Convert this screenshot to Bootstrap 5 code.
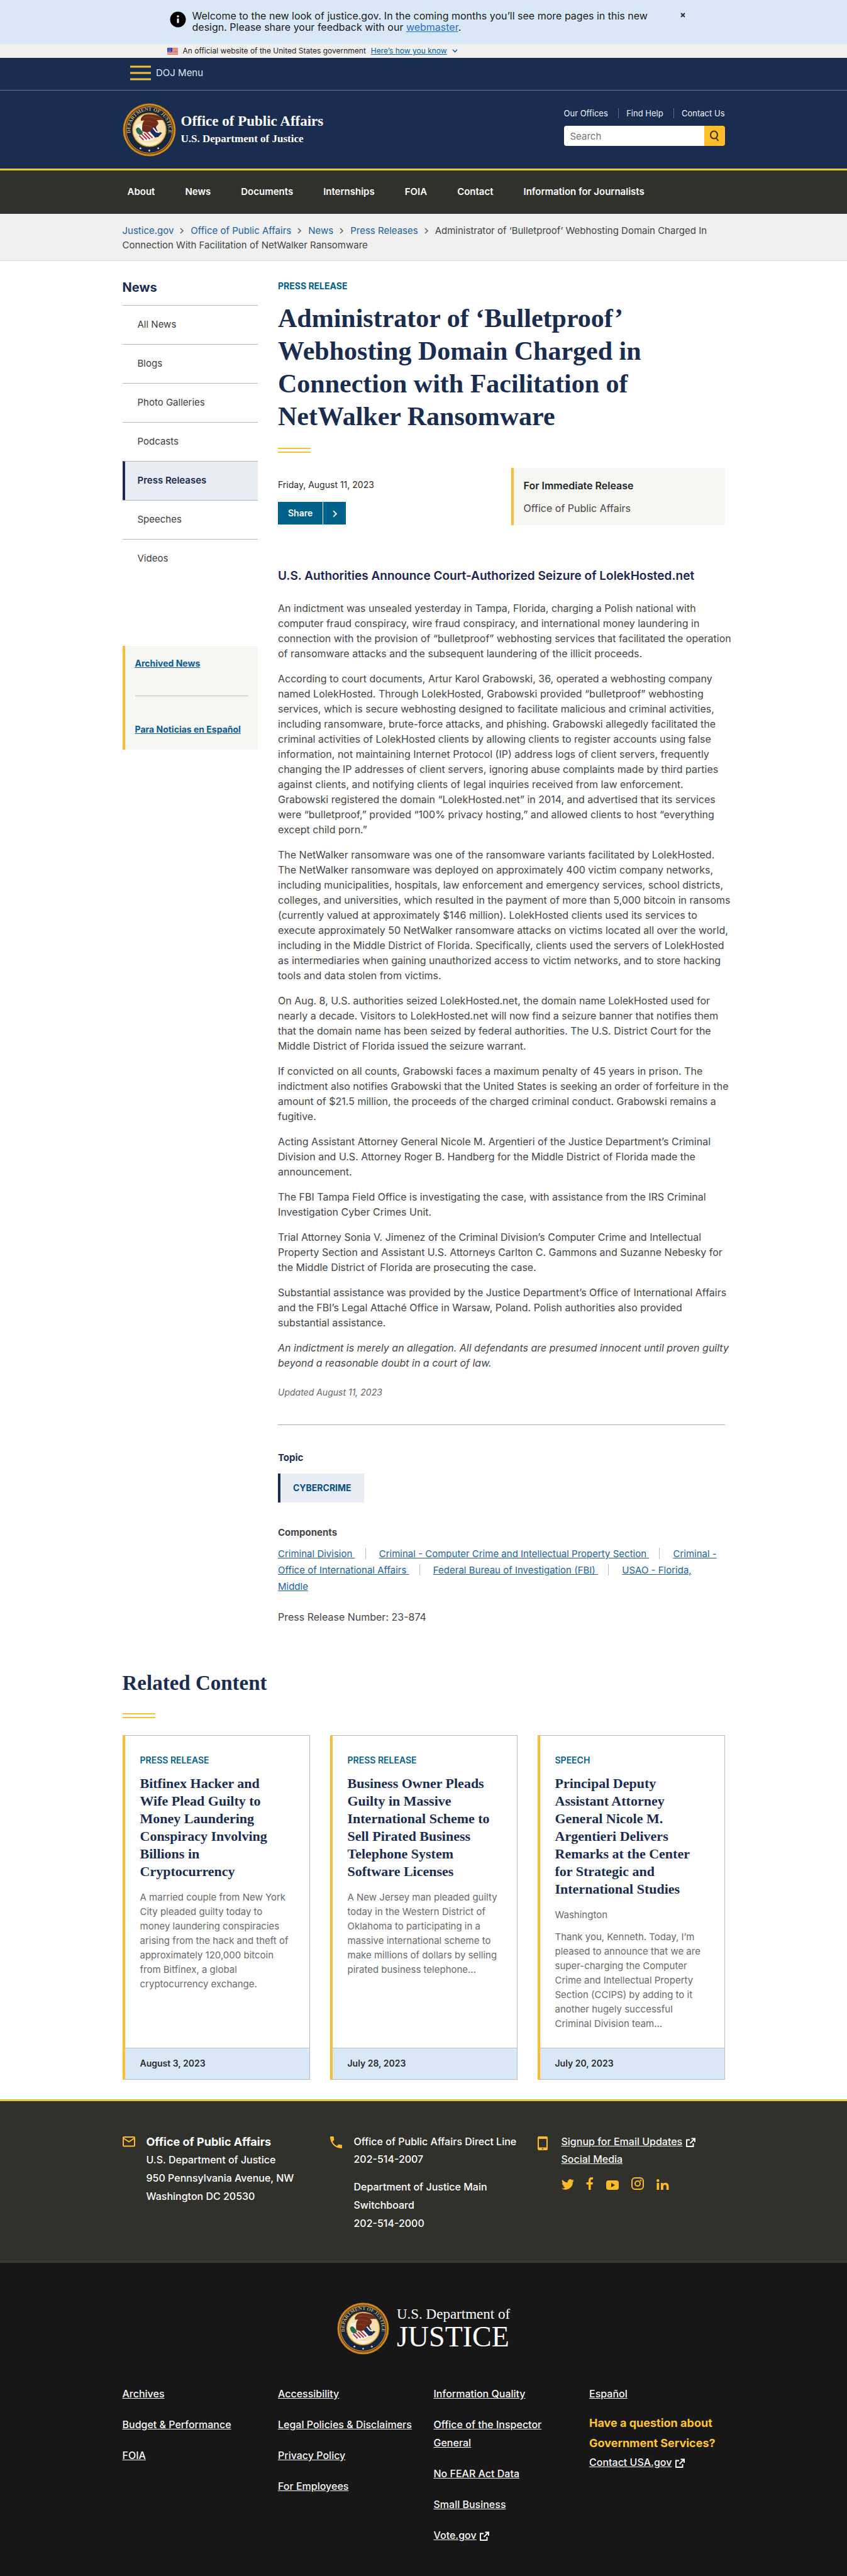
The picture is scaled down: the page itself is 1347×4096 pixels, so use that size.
<!DOCTYPE html>
<html lang="en">
<head>
<meta charset="utf-8">
<meta name="viewport" content="width=device-width, initial-scale=1">
<title>Office of Public Affairs | U.S. Department of Justice</title>
<link href="https://cdn.jsdelivr.net/npm/bootstrap@5.3.0/dist/css/bootstrap.min.css" rel="stylesheet">
<style>
:root{--navy:#1a2c50;--gold:#ffbc2a;--teal:#00618a;--link:#1b629d}
body{font-family:Inter,"Open Sans",sans-serif;font-size:15px;line-height:24px;color:#454545;background:#fff}
.serif{font-family:"Liberation Serif","DejaVu Serif",serif}
.wrap{max-width:1022px;padding:0 32px;margin:0 auto}
.navytext{color:var(--navy)}
.notice{background:#d9e8f6;color:#1b1b1b;min-height:70px;font-size:16px;line-height:18px}
.notice-in{max-width:832px;padding:16px 0 0 8px;margin:0 auto}
.notice-in p{max-width:744px}
.notice-in .info{margin:2px 10px 0 4px}
.notice a{color:#2672c5}
.xbtn{background:none;border:0;padding:0;line-height:0}
.official{background:#f0f0f0;color:#1b1b1b;font-size:12px;line-height:22px}
.official-in{max-width:832px;padding:0 8px;margin:0 auto}
.official a{color:#005ea2}
.menubar{background:var(--navy);height:52px;border-bottom:1px solid #66738c}
.menubar-in{padding:4px 0 0 207px}
.menubar button{color:#dfe6f2;font-size:15px;background:none;border:0;padding:8px 0;line-height:24px}
.masthead{background:var(--navy);border-bottom:3px solid #e9c92f;color:#fff;padding:20px 0 19px}
.top-name{font-size:23px;line-height:28px;font-weight:700}
.sub-name{font-size:17px;line-height:28px;font-weight:700}
.util{font-size:13px;line-height:16px}
.util a{color:#f0f4fb;text-decoration:none}
.util a+a{border-left:1px solid #5a6a88;padding-left:12px;margin-left:12px}
.find{width:256px}
.find input{font-size:15px;border:0;padding:0 10px;border-radius:4px 0 0 4px;min-width:0;height:32px}
.find button{width:39px;background:#fdbd26;border:0;border-radius:0 4px 4px 0;padding:0;line-height:0}
.mainnav{background:#30312b;padding:23px 0 24px}
.mainnav a{color:#fff;font-weight:600;font-size:15px;line-height:22px;text-decoration:none;white-space:nowrap}
.crumbs{background:#f0f0f0;border-bottom:1px solid #dcdee0;padding:15px 0 13px;line-height:23px}
.crumbs a{color:var(--link);text-decoration:none}
.crumbs svg{margin:0 11px 2px 10px;color:#6a6a6a}
.grid{--bs-gutter-x:32px}
.side-h{font-size:20px;line-height:28px;color:var(--navy);font-weight:700;padding:28px 0 14px}
.side .item{display:block;border-top:1px solid #b3b5ba;padding:18px 20px 19px 24px;color:#3d3d3d;text-decoration:none}
.side .now{background:#e8ecf4;border-left:4px solid var(--navy);padding-left:20px;color:var(--navy);font-weight:600}
.panel{background:#f6f6f2;border-left:4px solid var(--gold)}
.panel a{font-size:14px;font-weight:700;color:#0b5c96;line-height:22px;white-space:nowrap}
.panel hr{border-color:#b9bab3;opacity:1}
.more{margin-top:108px}
.more .first{padding:16px 0 39px}
.more .second{padding:41px 0 20px}
.kicker{font-weight:700;color:var(--teal);font-size:14px;line-height:22px;text-transform:uppercase}
.page-kicker{margin:29px 0 14px}
h1{font-size:42px;line-height:52px;font-weight:700;color:var(--navy);margin:0}
.twin{width:52px;height:8px;border-top:2px solid #edc33a;border-bottom:2px solid #edc33a}
.when{font-size:14px;line-height:22px;color:#2b2b2b}
.share{background:#00618a;color:#fff;font-weight:600;font-size:14px;border:0;height:36px;padding:0;display:flex}
.share span{padding:0 16px;line-height:36px}
.share .arr{border-left:1px solid #fff;width:37px;padding:0;text-align:center}
.release{width:340px;padding:16px 16px 15px;font-size:16px}
.release div+div{margin-top:12px}
.subhead{font-size:19px;line-height:28px;font-weight:600;color:#1b2450;margin:67px 0 25px}
.story{font-size:16px;margin-right:-14px}
.story p{margin-bottom:16px}
.updated{font-size:14px;line-height:22px;font-style:italic;color:#666}
.rule{border-color:#a9aab0;opacity:1;margin:40px 0}
.tag{display:inline-block;background:#e8ecf4;border-left:4px solid var(--navy);padding:12px 20px;margin-top:13px;font-size:14px;line-height:22px;font-weight:700;color:#0b4f7c;text-decoration:none}
.comps-h{margin:36px 0 9px}
.comps{line-height:26px}
.comps a{color:var(--link);text-decoration:underline}
.bar{display:inline-block;width:1px;height:18px;background:#b9bdc4;margin:0 17px -3px 16px}
.prn{margin-top:23px;font-size:16px}
.rel-h{font-size:33px;line-height:40px;font-weight:700;color:var(--navy);margin:73px 0 28px}
.cards{margin-top:27px;margin-bottom:31px}
.story-card{border:1px solid #b9bbc0;border-left:4px solid var(--gold);border-radius:0;font-size:15px;line-height:23px;color:#6a6a6a}
.story-card .body-in{padding:28px 20px 15px 24px;flex:1}
.story-card h3{font-size:22px;line-height:28px;font-weight:700;color:var(--navy);margin:12px 0 15px}
.story-card p{margin-bottom:12px}
.story-card .foot{background:#d9e8f6;border-top:1px solid #b6c3d3;padding:13px 24px 14px;color:#2b2b2b;font-weight:600;font-size:14px;line-height:22px}
.contact{background:#30312b;border-top:3px solid #e5c736;border-bottom:4px solid #363833;color:#fff;padding:50px 0 44px;font-size:16px;line-height:29px;font-weight:500}
.contact a,.base a{color:#f7f7f7}
.contact .blk{padding-left:38px}
.contact .tight{line-height:28px}
.contact .ico{position:absolute;left:16px;top:6px}
.office{font-size:18px;font-weight:700}
.social{margin-top:15px;line-height:0}
.base{background:#171717;color:#fff;font-size:16px;line-height:29px;font-weight:500;padding-bottom:50px}
.brand{padding:63px 0 48px}
.dept{font-size:23px;line-height:26px;font-weight:400}
.just{font-size:46px;line-height:46px;font-weight:400}
.base .lnk{margin-bottom:20px}
.ask{color:#ffc42e;font-size:18px;line-height:32px;font-weight:700}
</style>
<script src="https://cdn.jsdelivr.net/npm/bootstrap@5.3.0/dist/js/bootstrap.bundle.min.js"></script>
</head>
<body>
<svg class="d-none" aria-hidden="true">
<symbol id="ext" viewBox="0 0 16 16"><path d="M7 3.500H2V14h10.500V9M9.500 1.500H15V7M14.500 2L7.500 9" fill="none" stroke="currentColor" stroke-width="1.900"/></symbol>
<symbol id="chev" viewBox="0 0 6 10"><path d="M1 1l4 4-4 4" fill="none" stroke="currentColor" stroke-width="1.700"/></symbol>
</svg>

<div class="notice"><div class="notice-in d-flex align-items-start">
<svg class="info flex-shrink-0" width="26" height="26" viewBox="0 0 26 26"><circle cx="13" cy="13" r="12.500"/><circle cx="13" cy="8" r="1.700" fill="#fff"/><path d="M13 11.500v7" stroke="#fff" stroke-width="3"/></svg>
<p class="mb-0 flex-grow-1">Welcome to the new look of justice.gov. In the coming months you’ll see more pages in this new<br>design. Please share your feedback with our <a href="#">webmaster</a>.</p>
<button class="xbtn ms-auto mt-1" aria-label="Close"><svg width="8" height="8" viewBox="0 0 8 8"><path d="M1 1l6 6M7 1L1 7" stroke="#1a2c50" stroke-width="1.800"/></svg></button>
</div></div>

<div class="official"><div class="official-in d-flex align-items-center">
<svg width="17" height="11" viewBox="0 0 17 11" class="me-2"><path fill="#fff" d="M0 0h17v11H0z"/><path d="M0 .8h17M0 3.100h17M0 5.500h17M0 7.900h17M0 10.200h17" stroke="#db3e1f" stroke-width="1.300"/><path fill="#1e33b1" d="M0 0h8v6.500H0z"/><path d="M1 1.500h6M1 3.300h6M1 5h6" stroke="#fff" stroke-width=".7" stroke-dasharray="1 1"/></svg>
<span>An official website of the United States government</span>
<a href="#" class="ms-2">Here’s how you know</a>
<svg class="ms-2" width="9" height="6" viewBox="0 0 9 6"><path d="M1 1l3.500 3.500L8 1" fill="none" stroke="#1b629d" stroke-width="1.600"/></svg>
</div></div>

<header>
<div class="menubar"><div class="menubar-in"><button class="d-flex align-items-center gap-2"><svg width="33" height="24" viewBox="0 0 33 24"><path d="M0 2h33M0 12h33M0 22h33" stroke="#edc53a" stroke-width="3"/></svg>DOJ Menu</button></div></div>
<div class="masthead"><div class="wrap d-flex justify-content-between">
<div class="d-flex align-items-center gap-2"><svg width="85" height="85" viewBox="0 0 84 84" role="img" aria-label="Department of Justice seal"><g id="seal">
<circle cx="42" cy="42" r="41.500" fill="#b97a16"/><circle cx="42" cy="42" r="40" fill="none" stroke="#efb12b" stroke-width="1" stroke-dasharray="1.4 .8"/>
<circle cx="42" cy="42" r="38" fill="#5a1f17"/><circle cx="42" cy="42" r="37" fill="#e0a526"/><circle cx="42" cy="42" r="36" fill="#15263f"/>
<path id="ringpath" d="M15.500 56A30 30 0 1 1 68.500 56" fill="none"/>
<text font-family="Liberation Serif,serif" font-size="8" font-weight="700" fill="#d3ab56"><textPath href="#ringpath" startOffset="50%" text-anchor="middle">DEPARTMENT OF JUSTICE</textPath></text>
<circle cx="42" cy="42" r="27" fill="#d99d2b"/><circle cx="42" cy="42" r="25.500" fill="#f5dfad"/>
<path d="M24 56c5 9 12 11 18 11s13-3 18-11c-6 5-12 6-18 6s-12-1-18-6z" fill="#fbf0d6"/>
<path d="M21 34l9-2 3 14-9 5z" fill="#f4f1e4"/><path d="M21 41c2-4 5-3 7 0l4 5-3 5c-4-1-8-5-8-10z" fill="#2e6b46"/>
<path d="M31 21c4-5 12-4 18-3 7 1 13 4 15 9-5-1-8 0-11 0 5 3 3 7 0 9-1 6-4 11-10 13l-6-3-6-2c-1-7 0-13 3-17l-5 1c-1-3 0-5 2-7z" fill="#6e2d1b"/>
<path d="M34 23c7-3 15 0 22 2M33 30c6-3 12-2 18 1M32 36c5-2 11-1 15 3" fill="none" stroke="#8f4a28" stroke-width=".9"/>
<path d="M25 51l20-7 6 10c-7 6-17 7-25 3z" fill="#fff"/>
<path d="M26 51l7 7M30 49l8 8M34 47.500l9 9M38 46l9 9" stroke="#b3273a" stroke-width="2"/>
<path d="M43 45l8-9 4 8 7 3-6 6-5 1z" fill="#1d2f57"/><path d="M48 39l5 6 5 1" stroke="#fff" stroke-width="2" fill="none"/>
<g fill="#cfc9a8"><circle cx="28" cy="71" r="1.500"/><circle cx="42" cy="74.500" r="1.500"/><circle cx="56" cy="71" r="1.500"/></g>
</g></svg><div class="serif"><div class="top-name">Office of Public Affairs</div><div class="sub-name">U.S. Department of Justice</div></div></div>
<div><div class="util d-flex justify-content-between mt-2"><a href="#">Our Offices</a><a href="#">Find Help</a><a href="#">Contact Us</a></div>
<form class="find d-flex mt-2 pt-1" role="search"><input class="flex-grow-1" type="search" placeholder="Search" aria-label="Search"><button type="button" aria-label="Submit search"><svg width="16" height="18" viewBox="0 0 16 18"><ellipse cx="7.500" cy="7.500" rx="5.500" ry="6" fill="none" stroke="#40301a" stroke-width="2"/><path d="M10.500 12l4 5" stroke="#40301a" stroke-width="2"/></svg></button></form></div>
</div></div>
<nav class="mainnav" aria-label="Main"><div class="wrap"><div class="d-flex gap-5 ps-2"><a href="#">About</a><a href="#">News</a><a href="#">Documents</a><a href="#">Internships</a><a href="#">FOIA</a><a href="#">Contact</a><a href="#">Information for Journalists</a></div></div></nav>
</header>

<nav class="crumbs" aria-label="Breadcrumb"><div class="wrap"><a href="#">Justice.gov</a><svg width="6" height="10"><use href="#chev"/></svg><a href="#">Office of Public Affairs</a><svg width="6" height="10"><use href="#chev"/></svg><a href="#">News</a><svg width="6" height="10"><use href="#chev"/></svg><a href="#">Press Releases</a><svg width="6" height="10"><use href="#chev"/></svg><span>Administrator of ‘Bulletproof’ Webhosting Domain Charged In</span><br><span>Connection With Facilitation of NetWalker Ransomware</span></div></nav>

<div class="wrap">
<div class="row grid">
<aside class="col-3 side">
<div class="side-h">News</div>
<nav aria-label="News"><a class="item" href="#">All News</a><a class="item" href="#">Blogs</a><a class="item" href="#">Photo Galleries</a><a class="item" href="#">Podcasts</a><a class="item now" href="#">Press Releases</a><a class="item" href="#">Speeches</a><a class="item" href="#">Videos</a></nav>
<div class="panel more px-3"><div class="first"><a href="#">Archived News</a></div><hr class="my-0"><div class="second"><a href="#">Para Noticias en Español</a></div></div>
</aside>
<main class="col-9">
<div class="kicker page-kicker">Press Release</div>
<h1 class="serif">Administrator of ‘Bulletproof’ Webhosting Domain Charged in Connection with Facilitation of NetWalker Ransomware</h1>
<div class="twin mt-4"></div>
<div class="d-flex justify-content-between mt-4">
<div class="pt-3"><div class="when mb-3">Friday, August 11, 2023</div><button class="share"><span>Share</span><span class="arr"><svg width="7" height="12"><use href="#chev"/></svg></span></button></div>
<div class="panel release"><div class="fw-semibold text-dark">For Immediate Release</div><div>Office of Public Affairs</div></div>
</div>
<h2 class="subhead">U.S. Authorities Announce Court-Authorized Seizure of LolekHosted.net</h2>
<div class="story">
<p>An indictment was unsealed yesterday in Tampa, Florida, charging a Polish national with<br>computer fraud conspiracy, wire fraud conspiracy, and international money laundering in<br>connection with the provision of “bulletproof” webhosting services that facilitated the operation<br>of ransomware attacks and the subsequent laundering of the illicit proceeds.</p>
<p>According to court documents, Artur Karol Grabowski, 36, operated a webhosting company<br>named LolekHosted. Through LolekHosted, Grabowski provided “bulletproof” webhosting<br>services, which is secure webhosting designed to facilitate malicious and criminal activities,<br>including ransomware, brute-force attacks, and phishing. Grabowski allegedly facilitated the<br>criminal activities of LolekHosted clients by allowing clients to register accounts using false<br>information, not maintaining Internet Protocol (IP) address logs of client servers, frequently<br>changing the IP addresses of client servers, ignoring abuse complaints made by third parties<br>against clients, and notifying clients of legal inquiries received from law enforcement.<br>Grabowski registered the domain “LolekHosted.net” in 2014, and advertised that its services<br>were “bulletproof,” provided “100% privacy hosting,” and allowed clients to host “everything<br>except child porn.”</p>
<p>The NetWalker ransomware was one of the ransomware variants facilitated by LolekHosted.<br>The NetWalker ransomware was deployed on approximately 400 victim company networks,<br>including municipalities, hospitals, law enforcement and emergency services, school districts,<br>colleges, and universities, which resulted in the payment of more than 5,000 bitcoin in ransoms<br>(currently valued at approximately $146 million). LolekHosted clients used its services to<br>execute approximately 50 NetWalker ransomware attacks on victims located all over the world,<br>including in the Middle District of Florida. Specifically, clients used the servers of LolekHosted<br>as intermediaries when gaining unauthorized access to victim networks, and to store hacking<br>tools and data stolen from victims.</p>
<p>On Aug. 8, U.S. authorities seized LolekHosted.net, the domain name LolekHosted used for<br>nearly a decade. Visitors to LolekHosted.net will now find a seizure banner that notifies them<br>that the domain name has been seized by federal authorities. The U.S. District Court for the<br>Middle District of Florida issued the seizure warrant.</p>
<p>If convicted on all counts, Grabowski faces a maximum penalty of 45 years in prison. The<br>indictment also notifies Grabowski that the United States is seeking an order of forfeiture in the<br>amount of $21.5 million, the proceeds of the charged criminal conduct. Grabowski remains a<br>fugitive.</p>
<p>Acting Assistant Attorney General Nicole M. Argentieri of the Justice Department’s Criminal<br>Division and U.S. Attorney Roger B. Handberg for the Middle District of Florida made the<br>announcement.</p>
<p>The FBI Tampa Field Office is investigating the case, with assistance from the IRS Criminal<br>Investigation Cyber Crimes Unit.</p>
<p>Trial Attorney Sonia V. Jimenez of the Criminal Division’s Computer Crime and Intellectual<br>Property Section and Assistant U.S. Attorneys Carlton C. Gammons and Suzanne Nebesky for<br>the Middle District of Florida are prosecuting the case.</p>
<p>Substantial assistance was provided by the Justice Department’s Office of International Affairs<br>and the FBI’s Legal Attaché Office in Warsaw, Poland. Polish authorities also provided<br>substantial assistance.</p>
<p class="fst-italic">An indictment is merely an allegation. All defendants are presumed innocent until proven guilty<br>beyond a reasonable doubt in a court of law.</p>
</div>
<div class="updated mt-4">Updated August 11, 2023</div>
<hr class="rule">
<div class="fw-bold navytext">Topic</div>
<a class="tag" href="#">CYBERCRIME</a>
<div class="fw-bold comps-h">Components</div>
<div class="comps"><a href="#">Criminal Division </a><span class="bar"></span> <a href="#">Criminal - Computer Crime and Intellectual Property Section </a><span class="bar"></span> <a href="#">Criminal -<br>Office of International Affairs </a><span class="bar"></span> <a href="#">Federal Bureau of Investigation (FBI) </a><span class="bar"></span> <a href="#">USAO - Florida,<br>Middle</a></div>
<div class="prn">Press Release Number: 23-874</div>
</main>
</div>

<h2 class="rel-h serif">Related Content</h2>
<div class="twin"></div>
<div class="row grid cards">
<div class="col-4"><article class="card story-card h-100"><div class="body-in"><div class="kicker fw-semibold">Press Release</div><h3 class="serif">Bitfinex Hacker and<br>Wife Plead Guilty to<br>Money Laundering<br>Conspiracy Involving<br>Billions in<br>Cryptocurrency</h3><p>A married couple from New York<br>City pleaded guilty today to<br>money laundering conspiracies<br>arising from the hack and theft of<br>approximately 120,000 bitcoin<br>from Bitfinex, a global<br>cryptocurrency exchange.</p></div><div class="foot">August 3, 2023</div></article></div>
<div class="col-4"><article class="card story-card h-100"><div class="body-in"><div class="kicker fw-semibold">Press Release</div><h3 class="serif">Business Owner Pleads<br>Guilty in Massive<br>International Scheme to<br>Sell Pirated Business<br>Telephone System<br>Software Licenses</h3><p>A New Jersey man pleaded guilty<br>today in the Western District of<br>Oklahoma to participating in a<br>massive international scheme to<br>make millions of dollars by selling<br>pirated business telephone…</p></div><div class="foot">July 28, 2023</div></article></div>
<div class="col-4"><article class="card story-card h-100"><div class="body-in"><div class="kicker fw-semibold">Speech</div><h3 class="serif">Principal Deputy<br>Assistant Attorney<br>General Nicole M.<br>Argentieri Delivers<br>Remarks at the Center<br>for Strategic and<br>International Studies</h3><p>Washington</p><p>Thank you, Kenneth. Today, I’m<br>pleased to announce that we are<br>super-charging the Computer<br>Crime and Intellectual Property<br>Section (CCIPS) by adding to it<br>another hugely successful<br>Criminal Division team…</p></div><div class="foot">July 20, 2023</div></article></div>
</div>
</div>

<footer>
<div class="contact"><div class="wrap"><div class="row grid">
<div class="col-4 position-relative"><svg class="ico" width="21" height="17" viewBox="0 0 21 17"><rect x="1" y="1" width="18" height="14.500" rx="1" fill="none" stroke="#fdb927" stroke-width="2"/><path d="M1.500 3l8.500 5.500L18.500 3" fill="none" stroke="#fdb927" stroke-width="2"/></svg><div class="blk"><div class="office">Office of Public Affairs</div><div>U.S. Department of Justice</div><div>950 Pennsylvania Avenue, NW</div><div>Washington DC 20530</div></div></div>
<div class="col-4 position-relative"><svg class="ico" width="19" height="19" viewBox="0 0 18 18"><path d="M0 1a1 1 0 0 1 1-1h3.500a1 1 0 0 1 1 1c0 1.200.2 2.400.6 3.600a1 1 0 0 1-.3 1L3.600 7.800c1.500 2.900 3.700 5.100 6.600 6.600l2.200-2.200a1 1 0 0 1 1-.2c1.200.4 2.400.6 3.600.6a1 1 0 0 1 1 1V17a1 1 0 0 1-1 1C7.600 18 0 10.400 0 1z" fill="#fdb927"/></svg><div class="blk"><div class="tight text-nowrap">Office of Public Affairs Direct Line</div><div class="tight mb-3">202-514-2007</div><div>Department of Justice Main<br>Switchboard</div><div>202-514-2000</div></div></div>
<div class="col-4 position-relative"><svg class="ico" width="16" height="22" viewBox="0 0 16 22"><path fill-rule="evenodd" d="M2 0h12a2 2 0 0 1 2 2v18a2 2 0 0 1-2 2H2a2 2 0 0 1-2-2V2a2 2 0 0 1 2-2zm0 4v13.500h12V4z" fill="#fdb927"/><circle cx="8" cy="19.700" r="1" fill="#30312b"/></svg><div class="blk"><div class="tight"><a href="#">Signup for Email Updates</a> <svg width="16" height="16"><use href="#ext"/></svg></div><div class="tight"><a href="#">Social Media</a></div>
<div class="d-flex align-items-end gap-3 social">
<a href="#" aria-label="Twitter"><svg width="20" height="17" viewBox="0 0 24 20"><path fill="#fdb927" d="M24 2.400a10 10 0 0 1-2.800.8A5 5 0 0 0 23.300.5a10 10 0 0 1-3.100 1.200 4.900 4.900 0 0 0-8.400 4.500A14 14 0 0 1 1.700.9a4.900 4.900 0 0 0 1.500 6.600 5 5 0 0 1-2.200-.6v.1a4.900 4.900 0 0 0 3.900 4.800 5 5 0 0 1-2.200.1 4.900 4.900 0 0 0 4.600 3.400A9.900 9.900 0 0 1 0 17.500 14 14 0 0 0 21.500 5c1-.7 1.800-1.600 2.500-2.600z"/></svg></a>
<a href="#" aria-label="Facebook"><svg width="19" height="20" viewBox="0 0 19 20"><path fill="#fdb927" d="M7 20v-8.500H3.500V8H7V5c0-3.300 2-5 5-5h2v3.400h-2c-1.100 0-1.500.6-1.500 1.700V8H14l-.5 3.500h-3V20z"/></svg></a>
<a href="#" aria-label="YouTube"><svg width="20" height="15" viewBox="0 0 20 15"><rect width="20" height="15" rx="4" fill="#fdb927"/><path d="M8 4l6 3.500L8 11z" fill="#30312b"/></svg></a>
<a href="#" aria-label="Instagram" class="ms-1"><svg width="20" height="20" viewBox="0 0 20 20" fill="none" stroke="#fdb927" stroke-width="2"><rect x="1" y="1" width="18" height="18" rx="5"/><circle cx="10" cy="10" r="4"/><circle cx="15" cy="5" r=".6"/></svg></a>
<a href="#" aria-label="LinkedIn" class="ms-1"><svg width="20" height="17" viewBox="0 0 20 17" fill="#fdb927"><circle cx="2.300" cy="2.300" r="2.200"/><path d="M.5 6h3.700v11H.5zM7 6h3.500v1.500C11 6.600 12.200 5.700 14 5.700c4 0 5.500 2.300 5.500 6V17h-3.700v-5c0-1.600-.4-3-2.200-3s-2.700 1.200-2.700 3v5H7z"/></svg></a>
</div></div></div>
</div></div></div>

<div class="base"><div class="wrap">
<div class="brand d-flex justify-content-center align-items-center gap-2"><svg width="83" height="83" viewBox="0 0 84 84" aria-hidden="true"><use href="#seal"/></svg><div class="serif ps-1"><div class="dept">U.S. Department of</div><div class="just">JUSTICE</div></div></div>
<div class="row grid">
<div class="col-3"><div class="lnk"><a href="#">Archives</a></div><div class="lnk"><a href="#">Budget &amp; Performance</a></div><div class="lnk"><a href="#">FOIA</a></div></div>
<div class="col-3"><div class="lnk"><a href="#">Accessibility</a></div><div class="lnk text-nowrap"><a href="#">Legal Policies &amp; Disclaimers</a></div><div class="lnk"><a href="#">Privacy Policy</a></div><div class="lnk"><a href="#">For Employees</a></div></div>
<div class="col-3"><div class="lnk"><a href="#">Information Quality</a></div><div class="lnk"><a href="#">Office of the Inspector<br>General</a></div><div class="lnk"><a href="#">No FEAR Act Data</a></div><div class="lnk"><a href="#">Small Business</a></div><div><a href="#">Vote.gov</a> <svg width="16" height="16"><use href="#ext"/></svg></div></div>
<div class="col-3"><div class="lnk mb-3"><a href="#">Español</a></div><div class="ask">Have a question about<br>Government Services?</div><div><a href="#">Contact USA.gov</a> <svg width="16" height="16"><use href="#ext"/></svg></div></div>
</div>
</div></div>
</footer>
</body>
</html>
